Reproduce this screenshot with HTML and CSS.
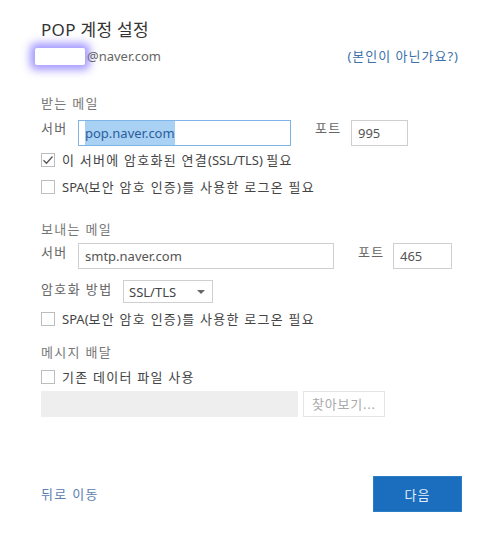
FILE: index.html
```html
<!DOCTYPE html>
<html lang="ko">
<head>
<meta charset="utf-8">
<title>POP 계정 설정</title>
<link rel="stylesheet" href="styles.css">
</head>
<body>
<div class="dialog">
  <div class="title">POP 계정 설정</div>
  <div class="account-row">
    <div class="account"><span class="mask"></span><span class="email">@naver.com</span></div>
    <a class="link" href="#">(본인이 아닌가요?)</a>
  </div>

  <div class="section-head first">받는 메일</div>
  <div class="server-row">
    <span class="lbl lbl-server">서버</span>
    <div class="input focused in-server1"><span class="sel">pop.naver.com</span></div>
    <span class="lbl lbl-port1">포트</span>
    <div class="input in-port1">995</div>
  </div>
  <div class="check-row c1">
    <span class="box"><svg width="14" height="14" viewBox="0 0 14 14"><polyline points="2.5,7.2 5.5,10.2 11.5,3.5" fill="none" stroke="#555" stroke-width="1.3"/></svg></span>
    <span class="ctext"><span class="ko">이 서버에 암호화된 연결</span>(SSL/TLS) <span class="ko">필요</span></span>
  </div>
  <div class="check-row c2">
    <span class="box"></span>
    <span class="ctext">SPA(<span class="ko">보안 암호 인증)를 사용한 로그온 필요</span></span>
  </div>

  <div class="section-head second">보내는 메일</div>
  <div class="server-row row2">
    <span class="lbl lbl-server">서버</span>
    <div class="input in-server2">smtp.naver.com</div>
    <span class="lbl lbl-port2">포트</span>
    <div class="input in-port2">465</div>
  </div>
  <div class="enc-row">
    <span class="lbl lbl-enc">암호화 방법</span>
    <div class="select"><span>SSL/TLS</span><span class="arrow"></span></div>
  </div>
  <div class="check-row c3">
    <span class="box"></span>
    <span class="ctext">SPA(<span class="ko">보안 암호 인증)를 사용한 로그온 필요</span></span>
  </div>

  <div class="section-head third">메시지 배달</div>
  <div class="check-row c4">
    <span class="box"></span>
    <span class="ctext"><span class="ko">기존 데이터 파일 사용</span></span>
  </div>
  <div class="file-row">
    <div class="file-box"></div>
    <div class="browse">찾아보기...</div>
  </div>

  <div class="footer">
    <a class="back" href="#">뒤로 이동</a>
    <div class="next">다음</div>
  </div>
</div>
</body>
</html>
```

FILE: styles.css
```css
html, body {
  margin: 0;
  padding: 0;
  background: #ffffff;
}
body {
  font-family: "Noto Sans", "Noto Sans CJK KR", sans-serif;
  font-size: 13px;
  color: #555;
}
.dialog {
  width: 500px;
  box-sizing: border-box;
  padding: 18px 41px 0 41px;
}
.title {
  font-size: 17px;
  line-height: 24px;
  color: #333;
  letter-spacing: 0.3px;
}
.account-row {
  height: 20px;
  display: flex;
  justify-content: space-between;
  align-items: center;
  margin-top: 4px;
}
.account {
  display: flex;
  align-items: center;
}
.mask {
  display: inline-block;
  width: 50px;
  height: 17px;
  margin-left: -6px;
  margin-right: 2px;
  background: #fff;
  border-radius: 2px;
  box-shadow: 0 0 9px 5px rgba(90, 70, 255, 0.55);
}
.email {
  color: #666;
  line-height: 20px;
}
.link {
  color: #3d72ad;
  text-decoration: none;
  line-height: 20px;
  letter-spacing: 1px;
}
.section-head {
  line-height: 20px;
  color: #777;
  letter-spacing: 1.3px;
}
.section-head.first { margin-top: 27px; }
.section-head.second { margin-top: 22px; }
.section-head.third { margin-top: 13px; }

.server-row {
  display: flex;
  align-items: flex-start;
  margin-top: 7px;
}
.server-row.row2 { margin-top: 4px; }
.lbl {
  line-height: 14px;
  color: #666;
  margin-top: 1px;
  white-space: nowrap;
  letter-spacing: 1.4px;
}
.lbl-server { width: 37px; }
.lbl-port1 { width: 36px; margin-left: 24px; }
.lbl-port2 { width: 35px; margin-left: 24px; }
.row2 .lbl { margin-top: 2px; }
.input {
  box-sizing: border-box;
  height: 26px;
  border: 1px solid #cfcfcf;
  padding: 0 6px;
  line-height: 24px;
  color: #555;
  white-space: nowrap;
}
.input.focused { border-color: #7fb4e6; }
.in-server1 { width: 213px; }
.in-port1 { width: 57px; }
.in-server2 { width: 256px; }
.in-port2 { width: 59px; }
.sel {
  background: #a9d1f3;
  color: #2b5e9e;
  padding: 3px 0;
}

.check-row {
  display: flex;
  align-items: center;
  height: 20px;
}
.c1 { margin-top: 4px; }
.c2 { margin-top: 7px; }
.c3 { margin-top: 6px; }
.c4 { margin-top: 5px; }
.box {
  box-sizing: border-box;
  width: 14px;
  height: 14px;
  border: 1px solid #bdbdbd;
  background: #fff;
  margin-right: 7px;
  display: flex;
}
.box svg { margin: -1px; }
.ctext {
  color: #444;
  line-height: 20px;
  white-space: nowrap;
}
.ko { letter-spacing: 1.25px; }

.enc-row {
  display: flex;
  align-items: flex-start;
  margin-top: 11px;
}
.lbl-enc { width: 72px; margin-right: 10px; margin-top: 2px; }
.select {
  box-sizing: border-box;
  width: 90px;
  height: 23px;
  border: 1px solid #cfcfcf;
  padding: 0 6px 0 5px;
  display: flex;
  align-items: center;
  justify-content: space-between;
  color: #444;
  font-size: 13px;
}
.arrow {
  width: 0;
  height: 0;
  border-left: 4px solid transparent;
  border-right: 4px solid transparent;
  border-top: 4px solid #666;
  margin-right: 1px;
}

.file-row {
  display: flex;
  margin-top: 4px;
  gap: 5px;
}
.file-box {
  width: 257px;
  height: 26px;
  background: #eeeeee;
}
.browse {
  box-sizing: border-box;
  width: 82px;
  height: 26px;
  border: 1px solid #e4e4e4;
  color: #aaa;
  line-height: 24px;
  padding-left: 8px;
  letter-spacing: 0.8px;
}

.footer {
  display: flex;
  justify-content: space-between;
  align-items: center;
  margin-top: 59px;
  margin-right: -3px;
}
.back {
  color: #5b80b0;
  text-decoration: none;
  line-height: 20px;
  letter-spacing: 1.3px;
}
.next {
  box-sizing: border-box;
  width: 89px;
  height: 36px;
  background: #1a6ebd;
  border: 1px solid #2d7cc6;
  color: #e3eef9;
  display: flex;
  align-items: center;
  justify-content: center;
  letter-spacing: 1px;
}
```
